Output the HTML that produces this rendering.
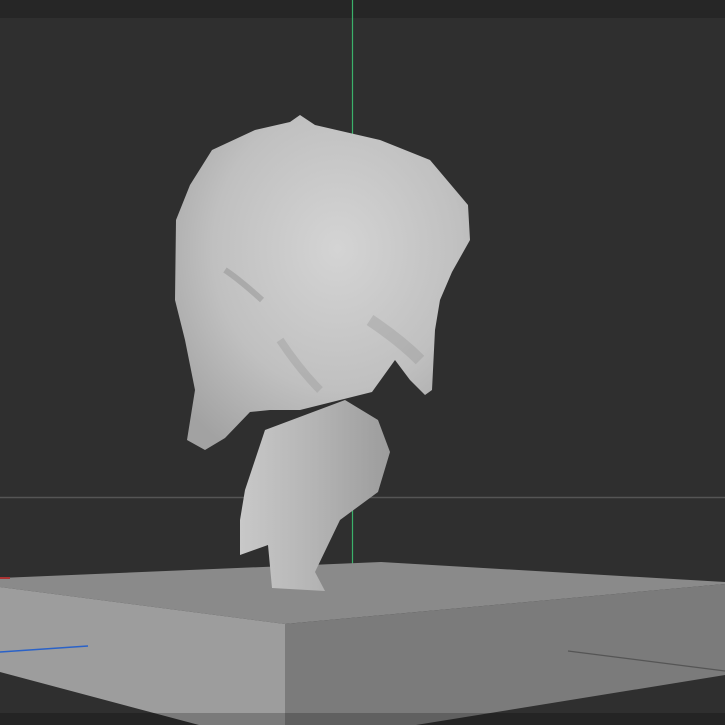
<!DOCTYPE html><html><head><style>html,body{margin:0;padding:0;background:#2f2f2f;width:725px;height:725px;overflow:hidden}</style></head><body>
<svg width="725" height="725" viewBox="0 0 725 725" xmlns="http://www.w3.org/2000/svg">
<defs>
<radialGradient id="hg" cx="0.55" cy="0.4" r="0.7"><stop offset="0" stop-color="#d4d4d4"/><stop offset="0.6" stop-color="#c0c0c0"/><stop offset="1" stop-color="#a2a2a2"/></radialGradient>
<linearGradient id="bg" x1="0" x2="1"><stop offset="0" stop-color="#c8c8c8"/><stop offset="0.5" stop-color="#b4b4b4"/><stop offset="1" stop-color="#9c9c9c"/></linearGradient>
</defs>
<rect width="725" height="725" fill="#2f2f2f"/>
<rect width="725" height="18" fill="#262626"/>
<line x1="0" y1="497.5" x2="725" y2="497.5" stroke="#555" stroke-width="1.5"/>
<line x1="352.5" y1="0" x2="352.5" y2="140" stroke="#3ab06a" stroke-width="1.2"/>
<line x1="352.5" y1="500" x2="352.5" y2="585" stroke="#3ab06a" stroke-width="1.2"/>
<polygon points="0,578 381,562 725,582 725,584 285,624 0,587" fill="#8a8a8a"/>
<polygon points="0,587 285,624 285,725 199,725 0,672" fill="#9d9d9d"/>
<polygon points="285,624 725,584 725,675 416,725 285,725" fill="#7b7b7b"/>
<rect x="0" y="713" width="725" height="12" fill="#000" opacity="0.22"/>
<line x1="0" y1="652" x2="88" y2="646" stroke="#2a62c8" stroke-width="1.5"/>
<line x1="568" y1="651" x2="725" y2="671" stroke="#555" stroke-width="1.2"/>
<rect x="0" y="577" width="10" height="2" fill="#a33"/>
<path d="M265,430 L245,490 L240,520 L240,555 L268,545 L272,588 L325,591 L315,572 L340,520 L378,492 L390,452 L378,420 L345,400 Z" fill="url(#bg)"/>
<path d="M300,115 L315,125 L380,140 L430,160 L468,205 L470,240 L452,272 L440,300 L435,330 L432,390 L425,395 L410,380 L395,360 L372,392 L340,400 L300,410 L270,410 L250,412 L225,438 L205,450 L187,440 L195,390 L185,340 L175,300 L176,220 L190,185 L212,150 L255,130 L290,122 Z" fill="url(#hg)"/>
<path d="M225,270 Q240,280 262,300" stroke="#8c8c8c" stroke-width="6" fill="none" opacity="0.45"/>
<path d="M370,320 Q400,340 420,360" stroke="#8c8c8c" stroke-width="12" fill="none" opacity="0.3"/>
<path d="M280,340 Q300,370 320,390" stroke="#8c8c8c" stroke-width="8" fill="none" opacity="0.3"/>
</svg>
</body></html>
